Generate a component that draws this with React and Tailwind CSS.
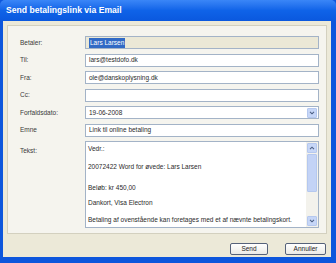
import React from "react";

const rows = [
  { label: "Til:", value: "lars@testdofo.dk" },
  { label: "Fra:", value: "ole@danskoplysning.dk" },
  { label: "Cc:", value: "" },
];

const Field = ({ children, className = "" }) => (
  <div
    className={`flex-1 h-full border border-[#a3b3c7] flex items-center pl-[3px] text-[6.5px] text-[#2a2a2a] ${className}`}
  >
    {children}
  </div>
);

const Row = ({ label, children, tall }) => (
  <div className={`flex ${tall ? "h-[87px] items-start" : "h-[13px] items-center"}`}>
    <div className={`w-[65px] text-[6.5px] text-[#3a3a3a] ${tall ? "pt-[5px]" : ""}`}>{label}</div>
    {children}
  </div>
);

const ArrowBox = ({ up }) => (
  <div className="w-[10px] h-[10px] rounded-[1px] bg-[#c6d6f7] border border-[#b5c8ef] flex items-center justify-center">
    <svg width="6" height="4" viewBox="0 0 6 4">
      <path
        d={up ? "M1 3.2 L3 1.2 L5 3.2" : "M1 0.8 L3 2.8 L5 0.8"}
        fill="none"
        stroke="#4d6185"
        strokeWidth="1.1"
      />
    </svg>
  </div>
);

export default function App() {
  return (
    <div className="w-[336px] h-[263px] bg-[#0d56dc] flex flex-col font-['Liberation_Sans',Arial,sans-serif]">
      {/* title bar */}
      <div className="h-[21px] shrink-0 bg-gradient-to-b from-[#3a86f7] via-[#0f63e8] to-[#0a58de] rounded-t-[5px] flex items-center px-[6px]">
        <span className="text-white font-bold text-[8.6px]">Send betalingslink via Email</span>
      </div>

      <div className="flex-1 ml-[3px] mr-[5px] mb-[6px] bg-[#ece9d8] flex flex-col px-[4px] pt-[4px]">
        <div className="h-[209px] border border-[#d3d0bf] bg-[#f5f4ee] pl-[12px] pr-[7px] pt-[10px] flex flex-col gap-[4.5px]">
          <Row label="Betaler:">
            <Field className="bg-[#ebe8d6] pl-[1px]">
              <span className="bg-[#316ac5] text-white px-[1px] leading-[10px]">Lars Larsen</span>
            </Field>
          </Row>
          {rows.map((r) => (
            <Row key={r.label} label={r.label}>
              <Field className="bg-white">{r.value}</Field>
            </Row>
          ))}
          <Row label="Forfaldsdato:">
            <Field className="bg-white justify-between pr-[1px]">
              <span>19-06-2008</span>
              <ArrowBox />
            </Field>
          </Row>
          <Row label="Emne">
            <Field className="bg-white">Link til online betaling</Field>
          </Row>
          <Row label="Tekst:" tall>
            <div className="flex-1 h-full border border-[#a3b3c7] bg-white flex text-[6.5px] text-[#2a2a2a]">
              <div className="flex-1 pl-[2px] pt-[3px] leading-[8px]">
                <div>Vedr.:</div>
                <div className="mt-[10px]">20072422 Word for øvede: Lars Larsen</div>
                <div className="mt-[13px]">Beløb: kr 450,00</div>
                <div className="mt-[7px]">Dankort, Visa Electron</div>
                <div className="mt-[9px] whitespace-nowrap">Betaling af ovenstående kan foretages med et af nævnte betalingskort.</div>
              </div>
              <div className="w-[12px] bg-[#f3f2ec] flex flex-col items-center py-[1px]">
                <ArrowBox up />
                <div className="w-[10px] h-[38px] mt-[1px] rounded-[1px] bg-[#c3d3f6] border border-[#b5c8ef]" />
                <div className="flex-1" />
                <ArrowBox />
              </div>
            </div>
          </Row>
        </div>

        <div className="flex justify-end gap-[17px] pt-[9px] pr-[1px]">
          <button className="w-[38px] h-[12px] rounded-[2px] border border-[#56627a] bg-gradient-to-b from-white to-[#ecebe6] text-[6.5px] text-[#222] flex items-center justify-center">
            Send
          </button>
          <button className="w-[41px] h-[12px] rounded-[2px] border border-[#56627a] bg-gradient-to-b from-white to-[#ecebe6] text-[6.5px] text-[#222] flex items-center justify-center">
            Annuller
          </button>
        </div>
      </div>
    </div>
  );
}
